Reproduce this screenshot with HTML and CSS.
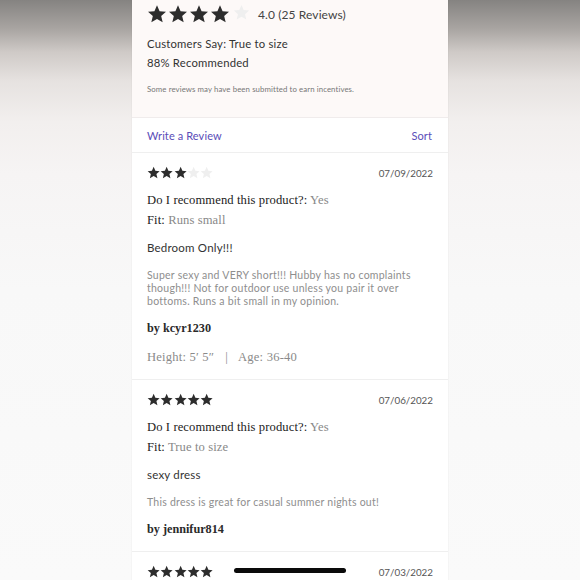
FILE: index.html
```html
<!DOCTYPE html>
<html>
<head>
<meta charset="utf-8">
<link rel="stylesheet" href="styles.css">
</head>
<body>
<svg width="0" height="0" class="defs">
  <defs>
    <path id="star" d="M12 1.5l3.1 7.1 7.7.7-5.8 5.1 1.8 7.6L12 18l-6.8 4 1.8-7.6-5.8-5.1 7.7-.7z"/>
  </defs>
</svg>
<div class="page">
  <section class="summary">
    <div class="sum-stars">
      <span class="stars big">
        <svg viewBox="0 0 24 24"><use href="#star"/></svg>
        <svg viewBox="0 0 24 24"><use href="#star"/></svg>
        <svg viewBox="0 0 24 24"><use href="#star"/></svg>
        <svg viewBox="0 0 24 24"><use href="#star"/></svg>
        <svg viewBox="0 0 24 24" class="off"><use href="#star"/></svg>
      </span>
      <span class="rating">4.0 (25 Reviews)</span>
    </div>
    <div class="sum-line first">Customers Say: True to size</div>
    <div class="sum-line">88% Recommended</div>
    <div class="disclaimer">Some reviews may have been submitted to earn incentives.</div>
  </section>
  <div class="actions">
    <span class="link">Write a Review</span>
    <span class="link">Sort</span>
  </div>

  <article class="review">
    <div class="rev-head">
      <span class="stars small">
        <svg viewBox="0 0 24 24"><use href="#star"/></svg>
        <svg viewBox="0 0 24 24"><use href="#star"/></svg>
        <svg viewBox="0 0 24 24"><use href="#star"/></svg>
        <svg viewBox="0 0 24 24" class="off"><use href="#star"/></svg>
        <svg viewBox="0 0 24 24" class="off"><use href="#star"/></svg>
      </span>
      <span class="date">07/09/2022</span>
    </div>
    <div class="attr rec"><span class="lbl">Do I recommend this product?:</span> <span class="val">Yes</span></div>
    <div class="attr fit"><span class="lbl">Fit:</span> <span class="val">Runs small</span></div>
    <div class="title">Bedroom Only!!!</div>
    <p class="body">Super sexy and VERY short!!! Hubby has no complaints though!!! Not for outdoor use unless you pair it over bottoms. Runs a bit small in my opinion.</p>
    <div class="author">by kcyr1230</div>
    <div class="meta"><span>Height: 5′ 5″</span><span class="sep">|</span><span>Age: 36-40</span></div>
  </article>

  <article class="review">
    <div class="rev-head">
      <span class="stars small">
        <svg viewBox="0 0 24 24"><use href="#star"/></svg>
        <svg viewBox="0 0 24 24"><use href="#star"/></svg>
        <svg viewBox="0 0 24 24"><use href="#star"/></svg>
        <svg viewBox="0 0 24 24"><use href="#star"/></svg>
        <svg viewBox="0 0 24 24"><use href="#star"/></svg>
      </span>
      <span class="date">07/06/2022</span>
    </div>
    <div class="attr rec"><span class="lbl">Do I recommend this product?:</span> <span class="val">Yes</span></div>
    <div class="attr fit"><span class="lbl">Fit:</span> <span class="val">True to size</span></div>
    <div class="title">sexy dress</div>
    <p class="body">This dress is great for casual summer nights out!</p>
    <div class="author">by jennifur814</div>
  </article>

  <article class="review">
    <div class="rev-head">
      <span class="stars small">
        <svg viewBox="0 0 24 24"><use href="#star"/></svg>
        <svg viewBox="0 0 24 24"><use href="#star"/></svg>
        <svg viewBox="0 0 24 24"><use href="#star"/></svg>
        <svg viewBox="0 0 24 24"><use href="#star"/></svg>
        <svg viewBox="0 0 24 24"><use href="#star"/></svg>
      </span>
      <span class="date">07/03/2022</span>
    </div>
  </article>
</div>
<div class="home-bar"></div>
</body>
</html>
```

FILE: styles.css
```css
html, body {
  margin: 0;
  padding: 0;
  height: 580px;
  overflow: hidden;
}
body {
  background: linear-gradient(to bottom, #858381 0%, #a9a5a2 5%, #cfcac7 9%, #e6e2e0 14%, #f2efee 21%, #f6f4f4 30%, #f8f8f8 50%, #fafafa 100%);
  font-family: Lato, "Liberation Sans", sans-serif;
  color: #333;
  position: relative;
}
.defs {
  position: absolute;
  width: 0;
  height: 0;
}
.page {
  width: 316px;
  margin: 0 auto;
  background: #fff;
  height: 580px;
  box-shadow: 0 0 1px rgba(0, 0, 0, 0.12);
}
.summary {
  background: #fdf9f8;
  padding: 0 15px;
  height: 117px;
  border-bottom: 1px solid #f0ecec;
}
.sum-stars {
  display: flex;
  align-items: center;
  height: 28px;
}
.stars {
  display: flex;
}
.stars svg {
  fill: #2d2d2d;
  display: block;
}
.stars svg.off {
  fill: #efefef;
}
.stars.big {
  gap: 1px;
}
.stars.big svg {
  width: 20px;
  height: 20px;
}
.stars.big svg.off {
  width: 17px;
  height: 17px;
  margin-left: 2px;
}
.rating {
  margin-left: 8px;
  font-size: 12px;
  color: #444;
  letter-spacing: 0.1px;
}
.sum-line {
  font-size: 11.3px;
  line-height: 19px;
  color: #333;
  letter-spacing: 0.2px;
}
.sum-line.first {
  margin-top: 6px;
}
.disclaimer {
  margin-top: 11px;
  font-size: 7.8px;
  line-height: 12px;
  color: #777;
  letter-spacing: 0.1px;
}
.actions {
  display: flex;
  justify-content: space-between;
  align-items: center;
  height: 34px;
  padding: 0 16px 0 15px;
  border-bottom: 1px solid #efefef;
}
.link {
  color: #5a4db8;
  font-size: 11px;
  letter-spacing: 0.1px;
}
.review {
  padding: 12px 15px 14px;
  border-bottom: 1px solid #efefef;
}
.rev-head {
  display: flex;
  justify-content: space-between;
  align-items: center;
  height: 16px;
}
.stars.small {
  gap: 0;
}
.stars.small svg {
  width: 13.3px;
  height: 13.3px;
}
.date {
  font-size: 9.8px;
  color: #555;
}
.attr {
  font-family: "Liberation Serif", serif;
  font-size: 12.6px;
  line-height: 16px;
  letter-spacing: 0.1px;
}
.attr.rec {
  margin-top: 11px;
}
.attr.fit {
  margin-top: 4px;
}
.lbl {
  color: #222;
}
.val {
  color: #888;
}
.title {
  margin-top: 12px;
  font-size: 11.5px;
  line-height: 16px;
  color: #333;
  letter-spacing: 0.2px;
}
.body {
  margin: 13px 0 0;
  font-size: 10.5px;
  line-height: 13px;
  color: #8e8e8e;
  letter-spacing: 0.25px;
}
.author {
  margin-top: 12px;
  font-family: "Liberation Serif", serif;
  font-weight: bold;
  font-size: 12.2px;
  line-height: 16px;
  color: #2a2a2a;
}
.meta {
  margin-top: 13px;
  font-family: "Liberation Serif", serif;
  font-size: 12.6px;
  line-height: 16px;
  color: #8a8a8a;
  display: flex;
  letter-spacing: 0.2px;
}
.sep {
  margin: 0 10px 0 11px;
}
.home-bar {
  position: absolute;
  left: 234px;
  width: 112px;
  bottom: 7px;
  height: 5px;
  border-radius: 3px;
  background: #0a0a0a;
}
```
